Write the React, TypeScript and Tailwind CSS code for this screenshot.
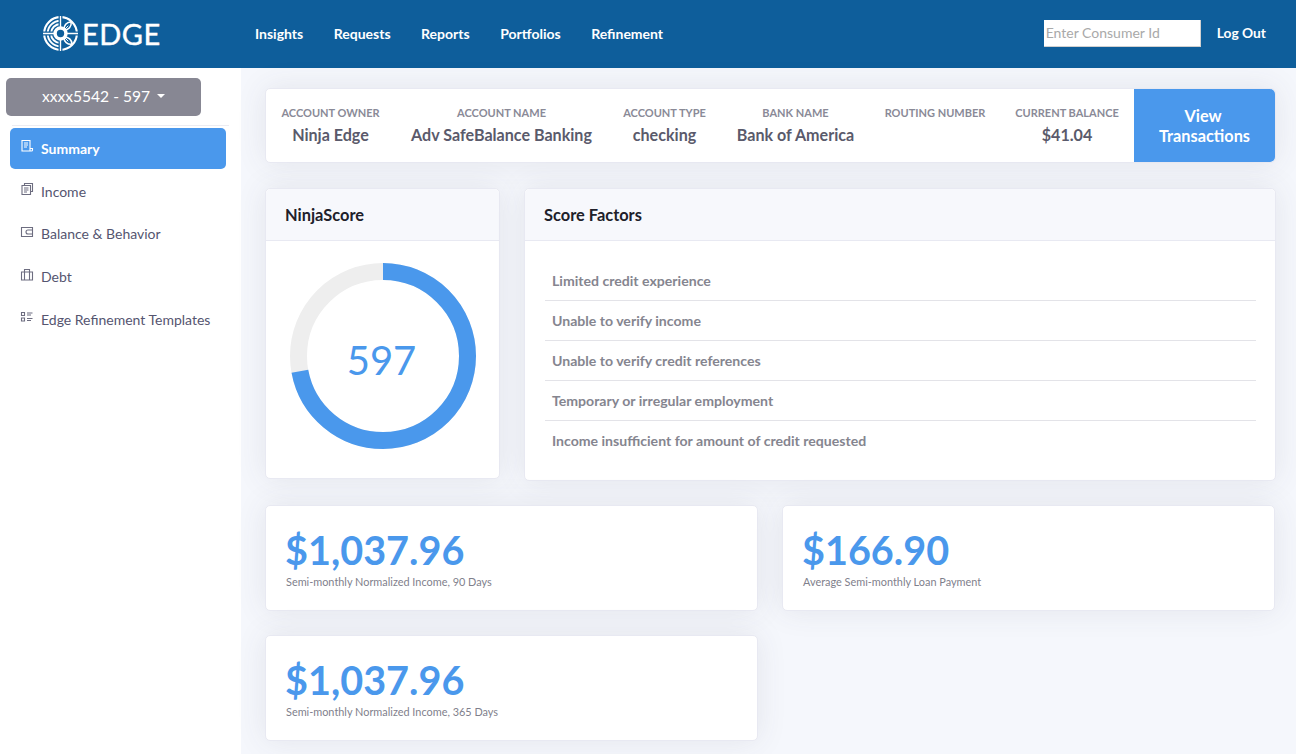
const NAV = ["Insights", "Requests", "Reports", "Portfolios", "Refinement"];
const FACTORS = [
  "Limited credit experience",
  "Unable to verify income",
  "Unable to verify credit references",
  "Temporary or irregular employment",
  "Income insufficient for amount of credit requested",
];
const ACCOUNT = [
  ["ACCOUNT OWNER", "Ninja Edge", "w-[129px]"],
  ["ACCOUNT NAME", "Adv SafeBalance Banking", "w-[213px]"],
  ["ACCOUNT TYPE", "checking", "w-[113px]"],
  ["BANK NAME", "Bank of America", "w-[149px]"],
  ["ROUTING NUMBER", "", "w-[130px]"],
  ["CURRENT BALANCE", "$41.04", "w-[134px]"],
];
const CARD = "rounded-[5px] border border-[#e8e9f2] bg-white shadow-[0_0_30px_rgba(70,70,85,0.1)]";

function arc(r: number, a0: number, a1: number) {
  const p = (a: number) => {
    const t = (a * Math.PI) / 180;
    return `${(18 + r * Math.sin(t)).toFixed(2)} ${(18 - r * Math.cos(t)).toFixed(2)}`;
  };
  return `M${p(a0)}A${r} ${r} 0 0 1 ${p(a1)}`;
}

function Logo() {
  return (
    <svg width="35" height="35" viewBox="0 0 36 36" fill="none" stroke="white" strokeWidth="2">
      <circle cx="18" cy="18" r="16.8" strokeWidth="2.2" />
      <path d={arc(13.2, 270, 360) + arc(9.8, 270, 360) + arc(13.2, 180, 270) + arc(9.8, 180, 270)} />
      <path d="M21.5 14.5C21.5 9.5 24.5 6.5 29 6c.5 5-2.5 8.5-7.5 8.5z" strokeWidth="1.6" />
      <path d="M21.5 21.5C26.5 21.5 29.5 24.5 30 29c-5 .5-8.5-2.5-8.5-7.5z" strokeWidth="1.6" />
      <path d="M22.5 13.5L26 10M22.5 22.5L26 26" strokeWidth="1" />
      <path d="M18 0V36M0 18H36" stroke="#0e5e9b" strokeWidth="4" />
      <path d="M18 0V36M0 18H36" strokeWidth="1.4" />
      <circle cx="18" cy="18" r="5.6" fill="#0e5e9b" strokeWidth="3.6" />
    </svg>
  );
}

function ItemIcon({ kind }: { kind: string }) {
  const common = { width: 14, height: 14, viewBox: "0 0 14 14", fill: "none", stroke: "currentColor", strokeWidth: 1.1 };
  if (kind === "summary")
    return (
      <svg {...common}>
        <path d="M2 1.5h8v10.5H2zM10 9.5h2.5v1.5a1 1 0 0 1-1 1H10M4 4h4M4 6h4M4 8h3" />
      </svg>
    );
  if (kind === "income")
    return (
      <svg {...common}>
        <path d="M4.5 3.5V1.5h8v8h-2M2 3.5h8.5v9H2zM4 6h4.5M4 8h4.5M4 10h3" />
      </svg>
    );
  if (kind === "balance")
    return (
      <svg {...common}>
        <path d="M1.5 2.5h11v9h-11zM12.5 5H8a2 2 0 0 0 0 4h4.5" />
      </svg>
    );
  if (kind === "debt")
    return (
      <svg {...common}>
        <path d="M1.5 4h11v8h-11zM4.5 4V1.5h5V4M4.5 4v8M9.5 4v8" />
      </svg>
    );
  return (
    <svg {...common}>
      <path d="M1.5 2.5h3v3h-3zM1.5 8h3v3h-3zM7 3h5.5M7 5h4M7 8.5h5.5M7 10.5h4" />
    </svg>
  );
}

function SideItem({ kind, label, active }: { kind: string; label: string; active?: boolean }) {
  return active ? (
    <div className="mb-[1px] flex h-[41px] items-center gap-[7px] rounded-[5px] bg-[#4a98ec] pb-[1px] pl-[10px] text-[14px] font-bold text-white">
      <span className="-mt-1"><ItemIcon kind={kind} /></span>
      {label}
    </div>
  ) : (
    <div className="flex h-[42.67px] items-center gap-[7px] pl-[10px] text-[14px] text-[#555570]">
      <span className="-mt-1 text-[#6d6d80]"><ItemIcon kind={kind} /></span>
      {label}
    </div>
  );
}

function Stat({ value, label }: { value: string; label: string }) {
  return (
    <div className={`flex h-[106px] flex-col pl-5 pt-[19px] ${CARD}`}>
      <div className="-ml-px text-[39.6px] leading-[50px] font-bold text-[#4a98ec]">{value}</div>
      <div className="text-[10.9px] leading-[14px] text-[#7f7f8c]">{label}</div>
    </div>
  );
}

function Donut() {
  const r = 84.5;
  const c = 2 * Math.PI * r;
  const share = 0.72;
  return (
    <div className="relative h-[186px] w-[186px]">
      <svg width="186" height="186" viewBox="0 0 186 186" className="-rotate-90">
        <circle cx="93" cy="93" r={r} fill="none" stroke="#eeeeee" strokeWidth="17" />
        <circle cx="93" cy="93" r={r} fill="none" stroke="#4a98ec" strokeWidth="17" strokeDasharray={`${c * share} ${c}`} />
      </svg>
      <div className="absolute inset-0 flex items-center justify-center pr-[2px] pt-2 text-[40px] text-[#4a98ec]">597</div>
    </div>
  );
}

export default function App() {
  return (
    <div className="h-[754px] w-[1296px] overflow-hidden bg-[#f5f7fc] font-['Lato','Open_Sans',sans-serif]">
      <header className="flex h-[68px] items-center bg-[#0e5e9b] pb-[2px] text-white">
        <div className="flex w-[255px] items-center pl-[43px]">
          <Logo />
          <span className="ml-[4px] text-[29px] leading-none tracking-[0.5px] [-webkit-text-stroke:0.4px_white]">EDGE</span>
        </div>
        <nav className="flex gap-[30.5px] text-[14px] font-bold">
          {NAV.map((n) => (
            <span key={n}>{n}</span>
          ))}
        </nav>
        <div className="ml-auto flex items-center pr-[30px]">
          <input
            placeholder="Enter Consumer Id"
            className="h-[27px] w-[157px] border-r border-b border-[#d0d0d0] bg-white px-[2px] text-[14px] text-gray-700 outline-none placeholder:text-[#a9a9a9]"
          />
          <span className="ml-4 text-[13.8px] font-bold">Log Out</span>
        </div>
      </header>
      <div className="flex h-[686px]">
        <aside className="w-[241px] shrink-0 bg-white pt-[10px]">
          <div className="ml-[6px] flex h-[38px] w-[195px] items-center justify-center gap-[7px] rounded-[5px] bg-[#878793] text-[15.6px] text-white">
            xxxx5542 - 597
            <span className="mb-[2px] border-x-[4px] border-t-[4px] border-x-transparent border-t-white" />
          </div>
          <div className="mx-[12px] mt-[9px] border-t border-[#ececf2]" />
          <div className="mx-[10px] mt-[2px] flex w-[216px] flex-col">
            <SideItem kind="summary" label="Summary" active />
            <SideItem kind="income" label="Income" />
            <SideItem kind="balance" label="Balance & Behavior" />
            <SideItem kind="debt" label="Debt" />
            <SideItem kind="templates" label="Edge Refinement Templates" />
          </div>
        </aside>
        <main className="flex-1 pl-6 pr-5 pt-5">
          <section className={`flex h-[75px] ${CARD}`}>
            <div className="flex flex-1">
              {ACCOUNT.map(([k, v, w]) => (
                <div key={k} className={`${w} flex flex-col items-center whitespace-nowrap pt-4`}>
                  <div className="text-[11px] leading-4 font-bold text-[#8a8a97]">{k}</div>
                  <div className="mt-[2px] text-[16.1px] leading-6 font-bold text-[#5a5a6b]">{v}</div>
                </div>
              ))}
            </div>
            <button className="w-[141px] rounded-r-[5px] bg-[#4a98ec] text-[16.3px] leading-[20px] font-bold text-white">
              <span className="pr-[3px]">View</span>
              <br />
              Transactions
            </button>
          </section>
          <div className="mt-[25px] flex gap-6">
            <section className={`h-[291px] w-[235px] ${CARD}`}>
              <div className="flex h-[52px] items-center rounded-t-[5px] border-b border-[#e8e9f2] bg-[#f7f8fc] pl-[19px] pt-[2px] text-[16.4px] font-bold text-[#20202a]">
                NinjaScore
              </div>
              <div className="flex justify-center pt-[22px]">
                <Donut />
              </div>
            </section>
            <section className={`h-[293px] flex-1 ${CARD}`}>
              <div className="flex h-[52px] items-center rounded-t-[5px] border-b border-[#e8e9f2] bg-[#f7f8fc] pl-[19px] pt-[2px] text-[16.4px] font-bold text-[#20202a]">
                Score Factors
              </div>
              <ul className="ml-5 mr-[19px] mt-5">
                {FACTORS.map((f, i) => (
                  <li
                    key={f}
                    className={`flex h-10 items-center border-b pl-[7px] text-[14.1px] font-bold text-[#85858f] ${i < 4 ? "border-[#e3e3e8]" : "border-transparent"}`}
                  >
                    {f}
                  </li>
                ))}
              </ul>
            </section>
          </div>
          <div className="mt-[24px] grid grid-cols-[493px_493px] gap-6">
            <Stat value="$1,037.96" label="Semi-monthly Normalized Income, 90 Days" />
            <Stat value="$166.90" label="Average Semi-monthly Loan Payment" />
            <Stat value="$1,037.96" label="Semi-monthly Normalized Income, 365 Days" />
          </div>
        </main>
      </div>
    </div>
  );
}
